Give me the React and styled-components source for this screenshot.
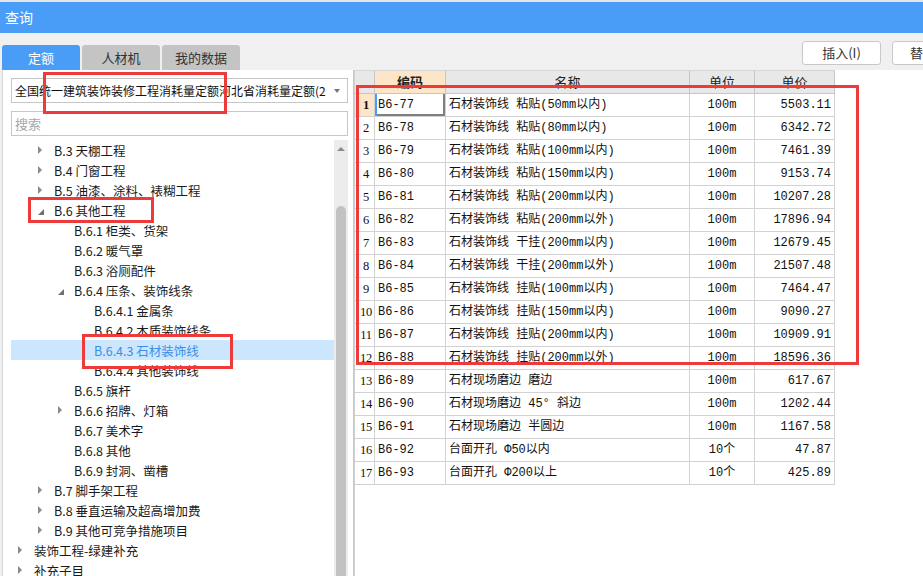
import React from 'react';
import styled, { createGlobalStyle, css } from 'styled-components';

const GlobalStyle = createGlobalStyle`
  html, body { margin: 0; padding: 0; }
  body { font-family: "Noto Sans CJK SC", "Noto Sans", sans-serif; background: #fff; }
`;

const Page = styled.div`
  position: relative;
  width: 923px;
  height: 576px;
  overflow: hidden;
  background: #f0f0f0;
  display: flex;
  flex-direction: column;
  border-top: 2px solid #e4e4e4;
  box-sizing: border-box;
`;

const TitleBar = styled.div`
  height: 31px;
  flex: none;
  background: #4a9df6;
  color: #fff;
  font-size: 14px;
  line-height: 31px;
  padding-left: 5px;
`;

const Main = styled.div`
  flex: 1;
  display: flex;
  min-height: 0;
`;

const LeftCol = styled.div`
  width: 354px;
  flex: none;
  display: flex;
  flex-direction: column;
`;

const TabBar = styled.div`
  height: 37px;
  flex: none;
  box-sizing: border-box;
  padding: 12px 0 0 2px;
  display: flex;
  gap: 2px;
`;

const Tab = styled.div`
  width: 78px;
  height: 25px;
  border-radius: 3px 3px 0 0;
  font-size: 13px;
  line-height: 25px;
  text-align: center;
  background: ${({ $active }) => ($active ? '#4a9df6' : '#c4c4c4')};
  color: ${({ $active }) => ($active ? '#fff' : '#333')};
`;

const Panel = styled.div`
  flex: 1;
  margin-left: 2px;
  background: #fff;
  border-left: 1px solid #d8d8d8;
  border-right: 1px solid #c8c8c8;
  padding: 8px 5px 0 8px;
  display: flex;
  flex-direction: column;
  gap: 8px;
  min-height: 0;
`;

const Select = styled.div`
  height: 25px;
  box-sizing: border-box;
  border: 1px solid #c6c6c6;
  display: flex;
  align-items: center;
  padding-left: 3px;
  font-size: 12px;
  color: #111;
  white-space: nowrap;
  overflow: hidden;
`;

const SelectText = styled.span`
  flex: 1;
  overflow: hidden;
`;

const Caret = styled.span`
  flex: none;
  width: 0;
  height: 0;
  margin: 0 7px 0 8px;
  border-left: 3px solid transparent;
  border-right: 3px solid transparent;
  border-top: 4px solid #777;
`;

const Search = styled.div`
  height: 25px;
  box-sizing: border-box;
  border: 1px solid #c6c6c6;
  font-size: 13px;
  line-height: 23px;
  padding-left: 3px;
  color: #a8a8a8;
`;

const TreeWrap = styled.div`
  flex: 1;
  display: flex;
  margin-top: -4px;
  min-height: 0;
`;

const Tree = styled.div`
  flex: 1;
  overflow: hidden;
`;

const TreeRow = styled.div`
  height: 20px;
  display: flex;
  align-items: center;
  padding-left: ${({ $level }) => 3 + ($level - 1) * 20}px;
  font-size: 12.5px;
  white-space: nowrap;
  color: ${({ $selected }) => ($selected ? '#3b8ee8' : '#1a1a1a')};
  background: ${({ $selected }) => ($selected ? '#cce6fd' : 'transparent')};
`;

const Toggle = styled.span`
  width: 20px;
  flex: none;
  display: flex;
  align-items: center;
  padding-left: 4px;
  box-sizing: border-box;

  &::before {
    content: '';
    display: block;
    width: 0;
    height: 0;
    ${({ $state }) =>
      $state === 'c' &&
      css`
        border-top: 4px solid transparent;
        border-bottom: 4px solid transparent;
        border-left: 4px solid #8a8a8a;
      `}
    ${({ $state }) =>
      $state === 'e' &&
      css`
        margin-top: 3px;
        border-left: 6px solid transparent;
        border-bottom: 6px solid #707070;
      `}
  }
`;

const ScrollTrack = styled.div`
  width: 14px;
  flex: none;
  background: #ececec;
  display: flex;
  flex-direction: column;
  align-items: center;
`;

const ScrollUp = styled.div`
  height: 12px;
  margin-top: 3px;
  display: flex;
  align-items: center;
  &::before {
    content: '';
    border-left: 4px solid transparent;
    border-right: 4px solid transparent;
    border-bottom: 4px solid #8c8c8c;
  }
`;

const ScrollThumb = styled.div`
  width: 10px;
  flex: 1;
  margin-top: 51px;
  margin-bottom: -10px;
  border-radius: 5px;
  background: #c2c2c2;
`;

const RightCol = styled.div`
  flex: 1;
  display: flex;
  flex-direction: column;
  min-width: 0;
`;

const Toolbar = styled.div`
  height: 37px;
  flex: none;
  box-sizing: border-box;
  padding-top: 8px;
  display: flex;
  justify-content: flex-end;
  gap: 11px;
  margin-right: -48px;
`;

const Button = styled.div`
  width: 79px;
  height: 24px;
  box-sizing: border-box;
  background: #fff;
  border: 1px solid #c8c8c8;
  border-radius: 3px;
  font-size: 13px;
  line-height: 22px;
  text-align: center;
  color: #333;
`;

const TableArea = styled.div`
  flex: 1;
  background: #fff;
  border-left: 1px solid #d0d0d0;
`;

const Grid = styled.div`
  display: grid;
  grid-template-columns: 20px 71px 244px 65px 80px;
  width: 480px;
  font-family: "Liberation Mono", "Noto Sans CJK SC", monospace;
  font-size: 12px;
  color: #111;
`;

const HeadCell = styled.div`
  height: 24px;
  box-sizing: border-box;
  border-right: 1px solid #c6c6c6;
  border-bottom: 1px solid #c6c6c6;
  border-top: 1px solid #d6d6d6;
  font-family: "Noto Sans CJK SC", sans-serif;
  font-size: 13px;
  line-height: 22px;
  text-align: center;
  color: #222;
  font-weight: ${({ $hl }) => ($hl ? 700 : 400)};
  background: ${({ $hl }) => ($hl ? '#fde5c7' : '#e8e8e8')};
`;

const Cell = styled.div`
  height: 23px;
  box-sizing: border-box;
  border-right: 1px solid #d2d2d2;
  border-bottom: 1px solid #d2d2d2;
  line-height: 22px;
  white-space: nowrap;
  overflow: hidden;
  padding: 0 3px;
  text-align: ${({ $align }) => $align || 'left'};
  background: ${({ $hl }) => ($hl ? '#fde5c7' : '#fff')};
  font-weight: ${({ $bold }) => ($bold ? 700 : 400)};
  ${({ $active }) =>
    $active &&
    css`
      box-shadow: inset 2px 0 0 #4a9df6, inset -2px -2px 0 #7f7f7f;
    `}
`;

const NumCell = styled(Cell)`
  padding: 0 0 0 3px;
  text-align: center;
  font-family: "Liberation Serif", "Noto Sans CJK SC", serif;
  font-size: 12.5px;
  letter-spacing: -0.3px;
`;

const RedBox = styled.div`
  position: absolute;
  border: 3px solid #ef3a3a;
  pointer-events: none;
`;

const treeItems = [
  { l: 2, t: 'B.3 天棚工程', a: 'c' },
  { l: 2, t: 'B.4 门窗工程', a: 'c' },
  { l: 2, t: 'B.5 油漆、涂料、裱糊工程', a: 'c' },
  { l: 2, t: 'B.6 其他工程', a: 'e' },
  { l: 3, t: 'B.6.1 柜类、货架' },
  { l: 3, t: 'B.6.2 暖气罩' },
  { l: 3, t: 'B.6.3 浴厕配件' },
  { l: 3, t: 'B.6.4 压条、装饰线条', a: 'e' },
  { l: 4, t: 'B.6.4.1 金属条' },
  { l: 4, t: 'B.6.4.2 木质装饰线条' },
  { l: 4, t: 'B.6.4.3 石材装饰线', sel: true },
  { l: 4, t: 'B.6.4.4 其他装饰线' },
  { l: 3, t: 'B.6.5 旗杆' },
  { l: 3, t: 'B.6.6 招牌、灯箱', a: 'c' },
  { l: 3, t: 'B.6.7 美术字' },
  { l: 3, t: 'B.6.8 其他' },
  { l: 3, t: 'B.6.9 封洞、凿槽' },
  { l: 2, t: 'B.7 脚手架工程', a: 'c' },
  { l: 2, t: 'B.8 垂直运输及超高增加费', a: 'c' },
  { l: 2, t: 'B.9 其他可竞争措施项目', a: 'c' },
  { l: 1, t: '装饰工程-绿建补充', a: 'c' },
  { l: 1, t: '补充子目', a: 'c' },
];

const rows = [
  ['B6-77', '石材装饰线 粘贴(50mm以内)', '100m', '5503.11'],
  ['B6-78', '石材装饰线 粘贴(80mm以内)', '100m', '6342.72'],
  ['B6-79', '石材装饰线 粘贴(100mm以内)', '100m', '7461.39'],
  ['B6-80', '石材装饰线 粘贴(150mm以内)', '100m', '9153.74'],
  ['B6-81', '石材装饰线 粘贴(200mm以内)', '100m', '10207.28'],
  ['B6-82', '石材装饰线 粘贴(200mm以外)', '100m', '17896.94'],
  ['B6-83', '石材装饰线 干挂(200mm以内)', '100m', '12679.45'],
  ['B6-84', '石材装饰线 干挂(200mm以外)', '100m', '21507.48'],
  ['B6-85', '石材装饰线 挂贴(100mm以内)', '100m', '7464.47'],
  ['B6-86', '石材装饰线 挂贴(150mm以内)', '100m', '9090.27'],
  ['B6-87', '石材装饰线 挂贴(200mm以内)', '100m', '10909.91'],
  ['B6-88', '石材装饰线 挂贴(200mm以外)', '100m', '18596.36'],
  ['B6-89', '石材现场磨边 磨边', '100m', '617.67'],
  ['B6-90', '石材现场磨边 45° 斜边', '100m', '1202.44'],
  ['B6-91', '石材现场磨边 半圆边', '100m', '1167.58'],
  ['B6-92', '台面开孔 Φ50以内', '10个', '47.87'],
  ['B6-93', '台面开孔 Φ200以上', '10个', '425.89'],
];

export default function App() {
  return (
    <>
      <GlobalStyle />
      <Page>
        <TitleBar>查询</TitleBar>
        <Main>
          <LeftCol>
            <TabBar>
              <Tab $active>定额</Tab>
              <Tab>人材机</Tab>
              <Tab>我的数据</Tab>
            </TabBar>
            <Panel>
              <Select>
                <SelectText>全国统一建筑装饰装修工程消耗量定额河北省消耗量定额(2012)</SelectText>
                <Caret />
              </Select>
              <Search>搜索</Search>
              <TreeWrap>
                <Tree>
                  {treeItems.map((it) => (
                    <TreeRow key={it.t} $level={it.l} $selected={it.sel}>
                      <Toggle $state={it.a} />
                      {it.t}
                    </TreeRow>
                  ))}
                </Tree>
                <ScrollTrack>
                  <ScrollUp />
                  <ScrollThumb />
                </ScrollTrack>
              </TreeWrap>
            </Panel>
          </LeftCol>
          <RightCol>
            <Toolbar>
              <Button>插入(I)</Button>
              <Button>替换(R)</Button>
            </Toolbar>
            <TableArea>
              <Grid>
                <HeadCell />
                <HeadCell $hl>编码</HeadCell>
                <HeadCell>名称</HeadCell>
                <HeadCell>单位</HeadCell>
                <HeadCell>单价</HeadCell>
                {rows.map((r, i) => (
                  <React.Fragment key={r[0]}>
                    <NumCell $hl={i === 0} $bold={i === 0}>{i + 1}</NumCell>
                    <Cell $active={i === 0}>{r[0]}</Cell>
                    <Cell>{r[1]}</Cell>
                    <Cell $align="center">{r[2]}</Cell>
                    <Cell $align="right">{r[3]}</Cell>
                  </React.Fragment>
                ))}
              </Grid>
            </TableArea>
          </RightCol>
        </Main>
        <RedBox style={{ left: 43, top: 70, width: 178, height: 36 }} />
        <RedBox style={{ left: 28, top: 195, width: 120, height: 20 }} />
        <RedBox style={{ left: 82, top: 332, width: 145, height: 29 }} />
        <RedBox style={{ left: 356, top: 83, width: 497, height: 274 }} />
      </Page>
    </>
  );
}
